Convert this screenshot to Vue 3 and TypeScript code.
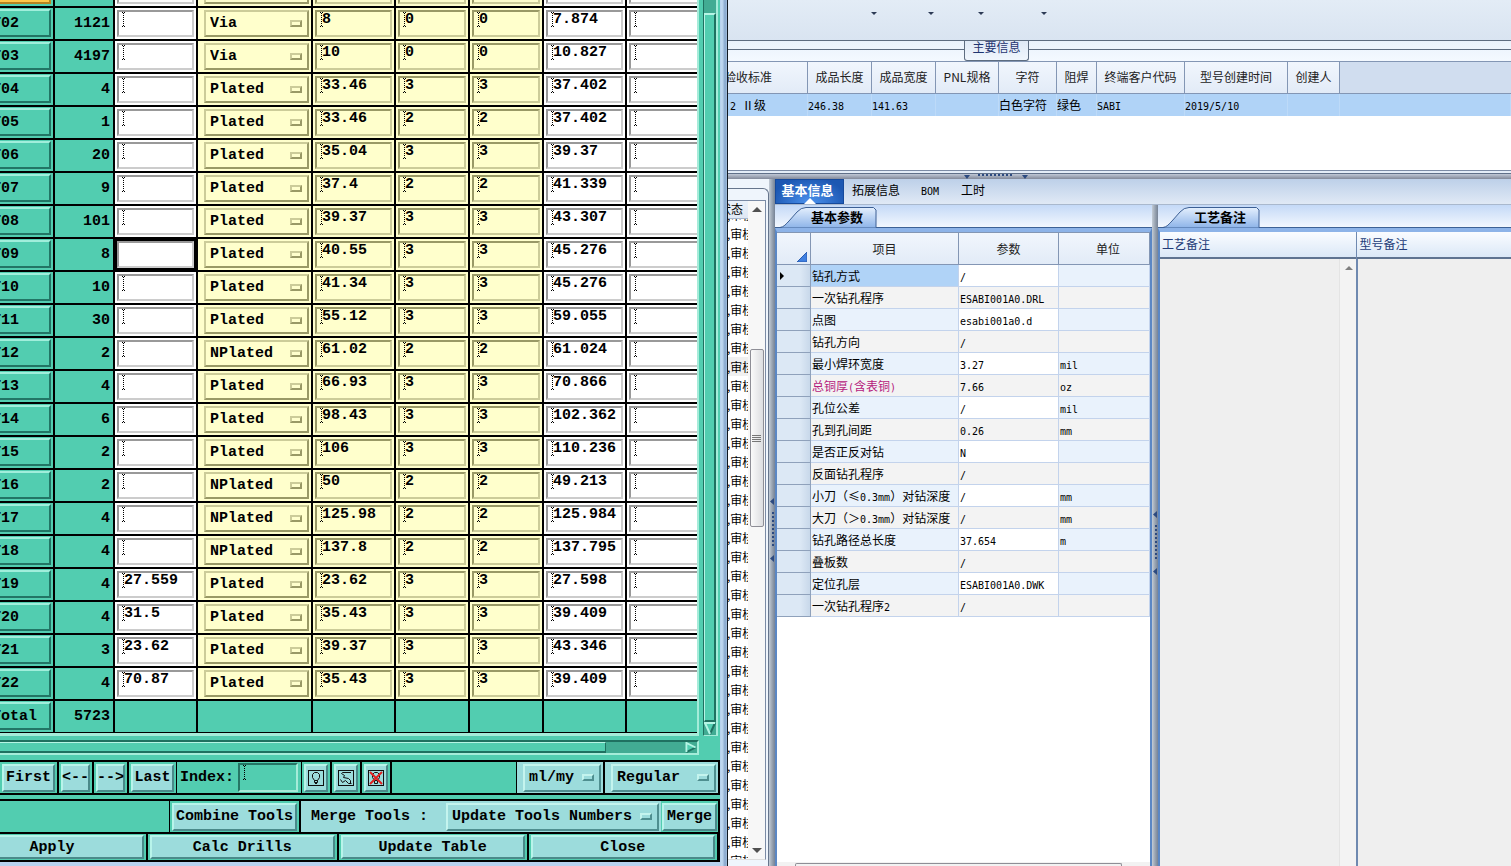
<script setup lang="ts">
interface Tool {
  id: string
  count: string
  custom: string
  type: 'Via' | 'Plated' | 'NPlated'
  finish: string
  plus: string
  minus: string
  drill: string
}

const raw: [string, string, string, Tool['type'], string, string, string, string][] = [
  ['T01', '', '', 'Via', '', '', '', ''],
  ['T02', '1121', '', 'Via', '8', '0', '0', '7.874'],
  ['T03', '4197', '', 'Via', '10', '0', '0', '10.827'],
  ['T04', '4', '', 'Plated', '33.46', '3', '3', '37.402'],
  ['T05', '1', '', 'Plated', '33.46', '2', '2', '37.402'],
  ['T06', '20', '', 'Plated', '35.04', '3', '3', '39.37'],
  ['T07', '9', '', 'Plated', '37.4', '2', '2', '41.339'],
  ['T08', '101', '', 'Plated', '39.37', '3', '3', '43.307'],
  ['T09', '8', '', 'Plated', '40.55', '3', '3', '45.276'],
  ['T10', '10', '', 'Plated', '41.34', '3', '3', '45.276'],
  ['T11', '30', '', 'Plated', '55.12', '3', '3', '59.055'],
  ['T12', '2', '', 'NPlated', '61.02', '2', '2', '61.024'],
  ['T13', '4', '', 'Plated', '66.93', '3', '3', '70.866'],
  ['T14', '6', '', 'Plated', '98.43', '3', '3', '102.362'],
  ['T15', '2', '', 'Plated', '106', '3', '3', '110.236'],
  ['T16', '2', '', 'NPlated', '50', '2', '2', '49.213'],
  ['T17', '4', '', 'NPlated', '125.98', '2', '2', '125.984'],
  ['T18', '4', '', 'NPlated', '137.8', '2', '2', '137.795'],
  ['T19', '4', '27.559', 'Plated', '23.62', '3', '3', '27.598'],
  ['T20', '4', '31.5', 'Plated', '35.43', '3', '3', '39.409'],
  ['T21', '3', '23.62', 'Plated', '39.37', '3', '3', '43.346'],
  ['T22', '4', '70.87', 'Plated', '35.43', '3', '3', '39.409'],
]
const tools: Tool[] = raw.map(([id, count, custom, type, finish, plus, minus, drill]) => ({
  id, count, custom, type, finish, plus, minus, drill,
}))
const activeTool = 'T09'

const fieldCols = [
  { key: 'finish', label: 'Finish size', tone: 'cream' },
  { key: 'plus', label: 'Plus tolerance', tone: 'cream' },
  { key: 'minus', label: 'Minus tolerance', tone: 'cream' },
  { key: 'drill', label: 'Drill size', tone: 'white' },
] as const

const modelHeads = ['验收标准', '成品长度', '成品宽度', 'PNL规格', '字符', '阻焊', '终端客户代码', '型号创建时间', '创建人']
const modelRow = ['.2 Ⅱ级', '246.38', '141.63', '', '白色字符', '绿色', 'SABI', '2019/5/10', '']

const params: [string, string, string][] = [
  ['钻孔方式', '/', ''],
  ['一次钻孔程序', 'ESABI001A0.DRL', ''],
  ['点图', 'esabi001a0.d', ''],
  ['钻孔方向', '/', ''],
  ['最小焊环宽度', '3.27', 'mil'],
  ['总铜厚(含表铜)', '7.66', 'oz'],
  ['孔位公差', '/', 'mil'],
  ['孔到孔间距', '0.26', 'mm'],
  ['是否正反对钻', 'N', ''],
  ['反面钻孔程序', '/', ''],
  ['小刀（≤0.3mm）对钻深度', '/', 'mm'],
  ['大刀（＞0.3mm）对钻深度', '/', 'mm'],
  ['钻孔路径总长度', '37.654', 'm'],
  ['叠板数', '/', ''],
  ['定位孔层', 'ESABI001A0.DWK', ''],
  ['一次钻孔程序2', '/', ''],
]

const statusRows = Array.from({ length: 36 }, (_, i) => i)

/* Latin runs are set half as wide as a Chinese character */
function runs(text: string): { t: string; latin: boolean }[] {
  return (text.match(/[\x20-\x7e]+|[^\x20-\x7e]+/g) ?? []).map((t) => ({
    t,
    latin: /^[\x20-\x7e]/.test(t),
  }))
}
</script>

<template>
  <div class="desktop">
    <section class="drill">
      <div class="body">
        <div class="sheet">
          <table class="tools">
            <colgroup>
              <col class="c-id" /><col class="c-count" /><col class="c-wide" /><col class="c-type" />
              <col class="c-wide" /><col class="c-tol" /><col class="c-tol" /><col class="c-wide" /><col class="c-wide" />
            </colgroup>
            <tbody>
              <tr v-for="t in tools" :key="t.id">
                <td><button class="rowbtn" :class="{ hot: t.id === 'T01' }">{{ t.id }}</button></td>
                <td class="num">{{ t.count }}</td>
                <td class="white" :class="{ active: t.id === activeTool }">
                  <label class="field">
                    <svg v-if="t.id !== activeTool" class="beam" viewBox="0 0 3 15"><path d="M1.5 1V15" stroke-dasharray="1 1" /><path d="M0 .5h1M2 .5h1M0 14.5h1M2 14.5h1" /></svg>
                    <input :value="t.custom" :aria-label="`${t.id} custom size`" />
                  </label>
                </td>
                <td class="cream">
                  <span class="pick">
                    <select :value="t.type" :aria-label="`${t.id} type`">
                      <option>Via</option><option>Plated</option><option>NPlated</option>
                    </select><i class="knob"></i>
                  </span>
                </td>
                <td v-for="c in fieldCols" :key="c.key" :class="c.tone">
                  <label class="field">
                    <svg class="beam" viewBox="0 0 3 15"><path d="M1.5 1V15" stroke-dasharray="1 1" /><path d="M0 .5h1M2 .5h1M0 14.5h1M2 14.5h1" /></svg>
                    <input :value="t[c.key]" :aria-label="`${t.id} ${c.label}`" />
                  </label>
                </td>
                <td class="white">
                  <label class="field">
                    <svg class="beam" viewBox="0 0 3 15"><path d="M1.5 1V15" stroke-dasharray="1 1" /><path d="M0 .5h1M2 .5h1M0 14.5h1M2 14.5h1" /></svg>
                    <input :aria-label="`${t.id} note`" />
                  </label>
                </td>
              </tr>
              <tr>
                <td><button class="rowbtn">Total</button></td>
                <td class="num">5723</td>
                <td v-for="n in 7" :key="n"></td>
              </tr>
            </tbody>
          </table>
        </div>
        <div class="vbar">
          <div class="vthumb"></div>
          <svg class="tri" viewBox="0 0 12 13"><path d="M0 1H11L6 12Z" fill="#52cdb0" /><path d="M11 1L6 12" stroke="#1f7060" stroke-width="2" /><path d="M0 1H11M1 1L6 12" stroke="#b5f5e5" stroke-width="2" fill="none" /></svg>
        </div>
      </div>
      <div class="hbar">
        <div class="hthumb"></div>
        <svg class="tri" viewBox="0 0 12 12"><path d="M1 1V11L11 6Z" fill="#52cdb0" /><path d="M1 11L11 6" stroke="#1f7060" stroke-width="2" /><path d="M1 11V1L11 6" stroke="#b5f5e5" stroke-width="2" fill="none" /></svg>
      </div>
      <div class="box nav">
        <div class="cell w-first"><button class="mbtn">First</button></div>
        <div class="cell w-arrow"><button class="mbtn">&lt;--</button></div>
        <div class="cell w-arrow"><button class="mbtn">--&gt;</button></div>
        <div class="cell w-last"><button class="mbtn">Last</button></div>
        <div class="cell w-index">
          <label for="idx">Index:</label>
          <span class="field teal">
            <svg class="beam" viewBox="0 0 3 15"><path d="M1.5 1V15" stroke-dasharray="1 1" /><path d="M0 .5h1M2 .5h1M0 14.5h1M2 14.5h1" /></svg>
            <input id="idx" />
          </span>
        </div>
        <div class="cell w-icon"><button class="mbtn" aria-label="Highlight">
          <svg class="ico" viewBox="0 0 16 16"><rect x=".5" y=".5" width="15" height="15" /><path d="M6.5 10.5L4.5 7.5V4.5L6.5 2.5H9.5L11.5 4.5V7.5L9.5 10.5ZM6.5 10.5V12.5H9.5V10.5M7 13.5H9" /></svg>
        </button></div>
        <div class="cell w-icon"><button class="mbtn" aria-label="Redraw">
          <svg class="ico" viewBox="0 0 16 16"><rect x=".5" y=".5" width="15" height="15" /><path d="M13 2.5H4.5L3.5 3.5L6.5 5.5L5.5 7.5L10.5 8.5L12.5 10.5V13.500M2.5 9.5L4.5 12.5L7.5 10.5L10.5 13.5H13.5" /></svg>
        </button></div>
        <div class="cell w-icon"><button class="mbtn" aria-label="Clear highlight">
          <svg class="ico" viewBox="0 0 16 16"><rect x=".5" y=".5" width="15" height="15" /><path d="M6.5 10.5L4.5 7.5V4.5L6.5 2.5H9.5L11.5 4.5V7.5L9.5 10.5ZM6.5 10.5V13.5H9.5V10.5" /><path class="red" d="M2 2L14 14M14 2L2 14" /></svg>
        </button></div>
        <div class="cell grow"></div>
        <div class="cell blue w-unit"><span class="pick"><select aria-label="Units"><option>ml/my</option></select><i class="knob"></i></span></div>
        <div class="cell blue w-mode"><span class="pick"><select aria-label="Mode"><option>Regular</option></select><i class="knob"></i></span></div>
      </div>
      <div class="box acts">
        <div class="line">
          <div class="cell grow"></div>
          <div class="cell w-combine"><button class="mbtn">Combine Tools</button></div>
          <div class="cell blue w-merge">
            <label for="merge">Merge Tools :</label>
            <span class="pick"><select id="merge"><option>Update Tools Numbers</option></select><i class="knob"></i></span>
          </div>
          <div class="cell w-do"><button class="mbtn">Merge</button></div>
        </div>
        <div class="quad">
          <div class="cell"><button class="mbtn">Apply</button></div>
          <div class="cell"><button class="mbtn">Calc Drills</button></div>
          <div class="cell"><button class="mbtn">Update Table</button></div>
          <div class="cell"><button class="mbtn">Close</button></div>
        </div>
      </div>
    </section>

    <section class="erp">
      <div class="ribbon">
        <button v-for="n in 4" :key="n" :class="`r${n}`" :aria-label="`Menu ${n}`"><svg viewBox="0 0 6 3"><path d="M0 0H6L3 3Z" fill="#2c3a55" /></svg></button>
      </div>
      <div class="caption"><button>主要信息</button></div>
      <div class="models">
        <table>
          <colgroup>
            <col class="m1" /><col class="m2" /><col class="m2" /><col class="m3" /><col class="m4" /><col class="m5" /><col class="m6" /><col class="m7" /><col class="m8" /><col />
          </colgroup>
          <thead><tr><th v-for="h in modelHeads" :key="h">{{ h }}</th><th class="rest"></th></tr></thead>
          <tbody>
            <tr>
              <td v-for="(v, i) in modelRow" :key="i"><span v-for="(r, j) in runs(v)" :key="j" :class="{ la: r.latin }">{{ r.t }}</span></td>
              <td></td>
            </tr>
          </tbody>
        </table>
      </div>
      <div class="hsplit">
        <svg viewBox="0 0 66 5"><path d="M0 1H6L3 5ZM64 1H58L61 5Z" fill="#2c4a80" /><path d="M14 1H49" stroke="#2c4a80" stroke-width="2" stroke-dasharray="2 2" /></svg>
      </div>
      <div class="lower">
        <aside class="status">
          <div class="frame">
            <div class="inner">
              <div class="list">
                <div class="head"><span>状态</span></div>
                <ul><li v-for="n in statusRows" :key="n" :class="{ sel: n === 8 }">,审核</li></ul>
              </div>
              <div class="sbar">
                <svg viewBox="0 0 10 5"><path d="M0 5H10L5 0Z" fill="#505050" /></svg>
                <div class="sthumb"><i></i></div>
                <svg viewBox="0 0 10 5"><path d="M0 0H10L5 5Z" fill="#505050" /></svg>
              </div>
            </div>
          </div>
        </aside>
        <div class="vsplit first"><svg viewBox="0 0 6 64"><path d="M5 0V7L1 3.5ZM5 57V64L1 60.5Z" fill="#2c4a80" /><path d="M4 14V49" stroke="#2c4a80" stroke-width="2" stroke-dasharray="2 2" /></svg></div>
        <main>
          <nav>
            <button class="on">基本信息<svg viewBox="0 0 12 6"><path d="M0 6L6 0L12 6Z" fill="#fff" /></svg></button>
            <button class="t2">拓展信息</button>
            <button class="t3"><span class="la">BOM</span></button>
            <button class="t4">工时</button>
          </nav>
          <div class="panes">
            <div class="pane left">
              <div class="tabs"><button><svg viewBox="0 0 97 21"><defs><linearGradient id="tg1" x2="0" y2="1"><stop stop-color="#e4effd" /><stop offset="1" stop-color="#8fb5e9" /></linearGradient></defs><path d="M0 20.5C4 20 6 17 9 14L17 5Q21 .5 26 .5H93.5L96 3V20.5" fill="url(#tg1)" stroke="#3c5f94" /></svg><span>基本参数</span></button></div>
              <div class="grid">
                <table>
                  <colgroup><col class="p0" /><col class="p1" /><col class="p2" /><col /></colgroup>
                  <thead><tr><th class="corner"><svg viewBox="0 0 10 10"><path d="M10 0V10H0Z" fill="#3f7fe0" stroke="#2a5cb0" /></svg></th><th>项目</th><th>参数</th><th>单位</th></tr></thead>
                  <tbody>
                    <tr v-for="(p, i) in params" :key="p[0]" :class="{ alt: i % 2 === 1, first: i === 0, pink: i === 5 }">
                      <td class="rh"><svg v-if="i === 0" viewBox="0 0 4 8"><path d="M0 0L4 4L0 8Z" /></svg></td>
                      <td><span v-for="(r, j) in runs(p[0])" :key="j" :class="{ la: r.latin }">{{ r.t }}</span></td>
                      <td class="val"><span class="la">{{ p[1] }}</span></td>
                      <td><span class="la">{{ p[2] }}</span></td>
                    </tr>
                  </tbody>
                </table>
                <div class="hs"><div></div></div>
              </div>
            </div>
            <div class="vsplit"><svg viewBox="0 0 6 64"><path d="M5 0V7L1 3.5ZM5 57V64L1 60.5Z" fill="#2c4a80" /><path d="M4 14V49" stroke="#2c4a80" stroke-width="2" stroke-dasharray="2 2" /></svg></div>
            <div class="pane right">
              <div class="tabs"><button><svg viewBox="0 0 97 21"><path d="M0 20.5C4 20 6 17 9 14L17 5Q21 .5 26 .5H93.5L96 3V20.5" fill="url(#tg1)" stroke="#3c5f94" /></svg><span>工艺备注</span></button></div>
              <div class="notes">
                <div class="note">
                  <label for="n1">工艺备注</label>
                  <div class="area"><textarea id="n1"></textarea><div class="strip"><svg viewBox="0 0 8 4"><path d="M0 4H8L4 0Z" fill="#808080" /></svg></div></div>
                </div>
                <div class="note">
                  <label for="n2">型号备注</label>
                  <div class="area"><textarea id="n2"></textarea></div>
                </div>
              </div>
            </div>
          </div>
        </main>
      </div>
    </section>
  </div>
</template>

<style>
body { margin: 0; overflow: hidden; }
</style>

<style scoped>
* { box-sizing: border-box; }
button, input, select, textarea { font: inherit; color: inherit; margin: 0; padding: 0; border: 0; border-radius: 0; background: none; outline: none; }
table { border-collapse: separate; border-spacing: 0; table-layout: fixed; }
td, th { padding: 0; }
svg { display: block; flex: none; }
.desktop { display: grid; grid-template-columns: 728fr 783fr; height: 100vh; overflow: hidden; }

/* drill tools manager */
.drill {
  display: flex; flex-direction: column; min-width: 0; min-height: 0; overflow: hidden;
  padding: 0 7px 4px 0; border-right: 1px solid #101820;
  background: linear-gradient(#52cdb0, #52cdb0) content-box, linear-gradient(90deg, #b7d2ee calc(100% - 7px), #c4dcf2 calc(100% - 6px), #86a6cc calc(100% - 3px), #b4cde8) border-box;
  font: bold 15px/17px "Liberation Mono", monospace; color: #000;
}
.body { flex: 1; display: flex; min-height: 0; padding-right: 2px; }
.sheet { flex: 1; min-width: 0; overflow: hidden; border-right: 2px solid #a5ecd9; border-bottom: 3px solid #a5ecd9; margin-right: 4px; }
.tools { width: 710px; margin: -25px 0 0 -12px; }
.c-id { width: 67px; }
.c-count { width: 60px; }
.c-wide { width: 83px; }
.c-type { width: 115px; }
.c-tol { width: 74px; }
.tools td { height: 33px; border-right: 2px solid #000; border-bottom: 2px solid #000; background: #52cdb0; vertical-align: top; }
.tools td.white { background: #fff; --hi: #ccc; --lo: #999; }
.tools td.cream { background: #ffffcc; --hi: #cccc99; --lo: #999966; }
.tools td.active { background: #000; }
.tools td.active .field { background: #fff; }
.tools td.num { text-align: right; vertical-align: middle; padding-right: 3px; }
.rowbtn { display: block; width: 62px; height: 28px; margin: 1px; text-align: left; padding-left: 1px; border: 2px solid; border-color: #a0eedb #227565 #227565 #a0eedb; }
.rowbtn.hot { background: #ffc84a; border-color: #ffe29a #b88420 #b88420 #ffe29a; }
.field { display: flex; align-items: flex-start; height: 27px; margin: 2px; padding-left: 3px; border: 2px solid; border-color: var(--lo) var(--hi) var(--hi) var(--lo); }
.beam { width: 3px; height: 15px; margin-right: -1px; stroke: #000; fill: none; shape-rendering: crispEdges; }
.field input { flex: 1; width: 0; min-width: 0; height: 16px; line-height: 16px; }
.pick { position: relative; display: block; height: 27px; margin: 2px 2px 2px 6px; }
.pick select { appearance: none; display: block; width: 100%; height: 100%; padding-left: 4px; border: 2px solid; border-color: var(--hi) var(--lo) var(--lo) var(--hi); }
.knob { position: absolute; right: 7px; top: 10px; width: 12px; height: 7px; border: 2px solid; border-color: var(--hi) var(--lo) var(--lo) var(--hi); pointer-events: none; }

.vbar { width: 15px; display: flex; flex-direction: column; background: #42ab93; border: solid; border-width: 0 2px 1px 1px; border-color: #1f7060 #a5ecd9 #a5ecd9 #1f7060; }
.vthumb { flex: 1; margin-top: 13px; background: #52cdb0; border: 2px solid; border-color: #b5f5e5 #1f7060 #1f7060 #b5f5e5; border-left-width: 1px; }
.vbar .tri { width: 12px; height: 13px; }
.hbar { display: flex; height: 15px; flex: none; margin: 4px 21px 5px 0; background: #42ab93; border: solid; border-width: 2px 2px 2px 0; border-color: #1f7060 #a5ecd9 #a5ecd9 #1f7060; }
.hthumb { flex: 1; margin-right: 79px; background: #52cdb0; border: 1px solid; border-color: #b5f5e5 #1f7060 #1f7060 #b5f5e5; border-bottom-width: 2px; border-left: 0; }
.hbar .tri { width: 12px; height: 11px; }

.box { flex: none; background: #000; border: solid #000; border-width: 2px 1px 2px 0; }
.nav { display: flex; height: 35px; }
.acts { height: 63px; margin-top: 4px; overflow: hidden; }
.cell { --hi: #c4f4ee; --lo: #4f8f90; display: flex; align-items: center; background: #52cdb0; border-right: 2px solid #000; min-width: 0; flex: none; }
.cell label { white-space: nowrap; flex: none; }
.cell.blue { background: #9cdcdc; }
.grow { flex: 1; border-right-width: 1px; }
.mbtn { flex: 1; height: 28px; margin: 0 2px; white-space: nowrap; background: #9cdcdc; border: 2px solid; border-color: #b8f4ea #4a8a8a #4a8a8a #b8f4ea; display: flex; align-items: center; justify-content: center; min-width: 0; }
.cell .pick { flex: 1; margin: 0 2px 0 6px; height: 28px; }
.w-first { width: 59px; }
.w-arrow { width: 35px; }
.w-last { width: 48px; border-right-width: 1px; }
.w-index { width: 125px; padding: 0 3px; justify-content: space-between; border-right-width: 1px; }
.w-icon { width: 30px; }
.w-unit { width: 88px; }
.w-mode { width: 114px; border-right-width: 1px; }
.field.teal { width: 60px; height: 29px; margin: 0; --lo: #257565; --hi: #a5ecd9; }
.ico { width: 16px; height: 16px; fill: none; stroke: #101010; }
.ico .red { stroke: #e02020; stroke-width: 2; }
.line { display: flex; height: 33px; border-bottom: 2px solid #000; }
.w-combine { width: 131px; }
.w-merge { width: 360px; border-right: 0; padding-left: 10px; }
.cell.w-merge .pick { flex: none; width: 213px; margin-left: 18px; }
.w-do { width: 58px; border-right-width: 1px; }
.w-do .mbtn { margin: 0 1px; }
.quad { display: grid; grid-template-columns: repeat(4, 1fr); height: 26px; margin-left: -42px; }
.quad .mbtn { height: 24px; }

/* order information */
.erp { display: flex; flex-direction: column; min-width: 0; min-height: 0; overflow: hidden; background: #eff5fc; font: 12px/16px "Noto Sans CJK SC", sans-serif; color: #000; }
.la { font-family: "DejaVu Sans Mono", monospace; font-size: 10px; line-height: 12px; white-space: pre; }
.ribbon { flex: none; display: flex; height: 41px; border-bottom: 1px solid #5d6c80; background: linear-gradient(#e3ecf6, #d9e4f1); }
.ribbon button { display: flex; align-items: flex-start; justify-content: flex-end; padding-top: 12px; width: 57px; }
.ribbon svg { width: 6px; height: 3px; }
.ribbon .r1 { width: 149px; }
.ribbon .r3 { width: 50px; }
.ribbon .r4 { width: 63px; }
.caption { flex: none; height: 20px; padding-left: 236px; background: linear-gradient(#5d6c80, #5d6c80) 0 8px / 100% 1px no-repeat, linear-gradient(#eaf2fc, #f4f9ff); }
.caption button { display: block; width: 65px; height: 20px; line-height: 12px; padding-bottom: 7px; background: linear-gradient(#dfe9f6, #f0f6fd); border: 1px solid #5d6c80; border-top: 0; border-radius: 0 0 3px 3px; color: #1e3470; }
.models { flex: none; height: 109px; overflow: hidden; background: #fff; }
.models table { width: calc(100% + 39px); margin-left: -39px; }
.m1 { width: 119px; } .m2 { width: 64px; } .m3 { width: 63px; } .m4 { width: 58px; } .m5 { width: 40px; } .m6 { width: 88px; } .m7 { width: 103px; } .m8 { width: 52px; }
.models th { height: 33px; padding-bottom: 2px; font-weight: normal; white-space: nowrap; background: linear-gradient(#f1f6fd, #e2ebf7); border: solid #8396b4; border-width: 1px 1px 1px 0; color: #222; }
.models th.rest { background: #d0ddef; border-right: 0; }
.models td { height: 22px; background: #b0d3f7; border-right: 1px solid #bddaf8; white-space: nowrap; }
.models td:first-child { padding-left: 35px; }
.hsplit { flex: none; height: 9px; padding: 4px 0 0 236px; background: linear-gradient(#7c8ba5 1px, #e4edf8 1px, #e4edf8 3px, #5f6f88 3px, #5f6f88 4px, #c0c8d6 4px, #82899a); }
.hsplit svg { width: 66px; height: 5px; }
.lower { flex: 1; display: flex; min-height: 0; }
.status { flex: none; width: 41px; padding-top: 9px; }
.frame { height: 100%; padding: 11px 2px 0 0; border: solid #66758c; border-width: 1px 1px 0 0; border-top-right-radius: 6px; }
.inner { display: flex; height: calc(100% - 6px); border: solid #7b8ba5; border-width: 1px 1px 0 0; background: #fff; border-bottom: 1px solid #ddd; }
.list { width: 20px; overflow: hidden; display: flex; flex-direction: column; }
.head { flex: none; height: 18px; position: relative; z-index: 1; background: linear-gradient(#eaf1fa, #dfe8f4); border-bottom: 1px solid #a9b8ce; display: flex; justify-content: flex-end; padding-right: 5px; line-height: 16px; white-space: nowrap; }
.list ul { list-style: none; margin: -14px 0 0; padding: 0; }
.list li { height: 19px; line-height: 19px; white-space: nowrap; margin-left: -1px; }
.list li.sel { background: #f0f0f0; }
.sbar { flex: 1; display: flex; flex-direction: column; align-items: center; padding: 6px 0; background: #f7f7f7; }
.sbar svg { width: 10px; height: 5px; }
.sthumb { width: 14px; height: 178px; margin: 137px 0 auto; display: grid; place-items: center; border: 1px solid #8e8e96; border-radius: 2px; background: linear-gradient(90deg, #fafafa, #dcdde0); }
.sthumb i { width: 9px; height: 7px; background: repeating-linear-gradient(#777 0 1px, transparent 1px 2px); }
.vsplit { flex: none; width: 6px; background: linear-gradient(90deg, #c3ccd6, #9aa5b3 50%, #768396); display: flex; flex-direction: column; }
.vsplit svg { width: 6px; height: 64px; margin-top: 306px; }
.vsplit.first svg { margin-top: 319px; }
main { flex: 1; min-width: 0; display: flex; flex-direction: column; }
nav { flex: none; display: flex; height: 26px; background: linear-gradient(#bdd0e9, #e0e9f5); border-bottom: 1px solid #a9b8cd; }
nav button { line-height: 20px; padding-bottom: 4px; white-space: nowrap; text-align: left; }
nav .on { position: relative; width: 69px; padding: 0 4px 4px 0; text-align: center; color: #fff; font-weight: bold; font-size: 13px; background: radial-gradient(ellipse at 50% 100%, #4c92ee, #1c57b2 80%); border: 1px solid #164a9c; }
nav .on svg { position: absolute; bottom: -1px; left: 28px; width: 12px; height: 6px; }
nav .t2 { width: 77px; padding-left: 8px; }
nav .t3 { width: 40px; }
nav .t4 { width: 40px; }
.panes { flex: 1; display: flex; min-height: 0; }
.pane { display: flex; flex-direction: column; min-width: 0; min-height: 0; }
.pane.left { flex: 377 1 0; }
.pane.right { flex: 353 1 0; }
.tabs { flex: none; height: 23px; padding: 2px 0 0 5px; border-bottom: 1px solid #3d6195; background: linear-gradient(#c4d9f7, #f2f7fe); }
.tabs button { position: relative; display: block; width: 97px; height: 21px; line-height: 17px; padding: 0 0 3px 31px; font-weight: bold; font-size: 13px; text-align: left; }
.tabs svg { position: absolute; inset: 0; width: 97px; height: 21px; }
.tabs span { position: relative; white-space: nowrap; }
.grid { flex: 1; display: flex; flex-direction: column; min-height: 0; background: #fff; border: 2px solid #5b87c4; border-top: 4px solid #8db3e8; border-bottom: 0; }
.grid table { width: 100%; }
.p0 { width: 34px; } .p1 { width: 148px; } .p2 { width: 100px; }
.grid th { height: 33px; font-weight: normal; background: linear-gradient(#f1f6fd, #e2ebf7); border: solid #8396b4; border-width: 1px 1px 1px 0; color: #222; }
.grid th:last-child { padding-left: 8px; }
.grid .corner { vertical-align: bottom; }
.corner svg { width: 10px; height: 10px; margin: 0 3px 2px auto; }
.grid td { height: 22px; line-height: 18px; padding-left: 1px; white-space: nowrap; background: #e9f2fc; border: solid #c3d3ec; border-width: 0 1px 1px 0; }
.grid td.val { background: #fff; }
.grid .alt td { background: #f3f3f3; }
.grid td.rh, .grid .alt td.rh { background: linear-gradient(90deg, #dce8f5 70%, #c8d8ea); border-color: #8fa1bb; padding-left: 3px; }
.rh svg { width: 4px; height: 8px; }
.grid .first td:nth-child(2) { background: #b0d3f7; }
.pink td:nth-child(2) { color: #b5197c; }
.hs { height: 4px; margin-top: auto; padding: 1px 28px 0 18px; background: #f2f2f2; }
.hs div { height: 3px; border: 1px solid #8e8e96; border-bottom: 0; border-radius: 2px 2px 0 0; }
.notes { flex: 1; display: flex; min-height: 0; border-top: 4px solid #8db3e8; border-left: 2px solid #5b87c4; }
.note { flex: 197 1 0; min-width: 0; display: flex; flex-direction: column; border-right: 1px solid #6f89b0; }
.note + .note { flex-grow: 154; border-right: 0; }
.note label { flex: none; height: 27px; line-height: 24px; padding-left: 2px; color: #243c78; background: linear-gradient(#fafcff, #dbe8f7); border-bottom: 2px solid #5f7390; }
.area { flex: 1; display: flex; background: #efefef; min-height: 0; }
.area textarea { flex: 1; min-width: 0; resize: none; }
.note + .note .area { border-left: 1px solid #6f89b0; }
.strip { width: 17px; border-left: 1px solid #e4e4e4; background: #f3f3f3; padding: 7px 0 0 5px; }
.strip svg { width: 8px; height: 4px; }
</style>
